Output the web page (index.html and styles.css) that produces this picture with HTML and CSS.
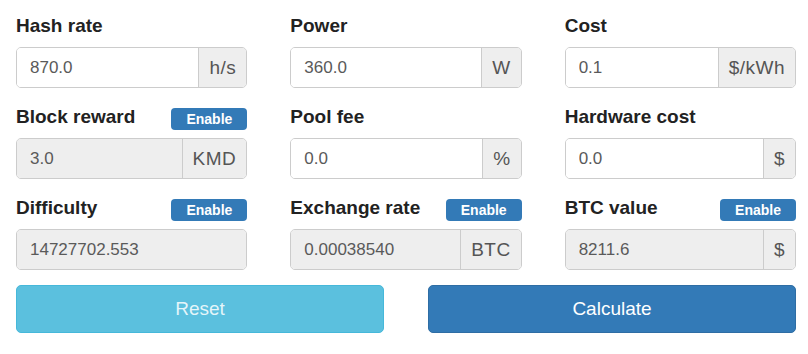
FILE: index.html
```html
<!DOCTYPE html>
<html lang="en">
<head>
    <meta charset="UTF-8">
    <meta name="viewport" content="width=device-width, initial-scale=1.0">
    <title>Mining Calculator</title>
    <link rel="stylesheet" href="styles.css">
</head>
<body>
    <div class="calc">
        <div class="fields">
            <div class="field">
                <div class="label-row"><label>Hash rate</label></div>
                <div class="input-group">
                    <input type="text" value="870.0">
                    <span class="addon">h/s</span>
                </div>
            </div>
            <div class="field">
                <div class="label-row"><label>Power</label></div>
                <div class="input-group">
                    <input type="text" value="360.0">
                    <span class="addon">W</span>
                </div>
            </div>
            <div class="field">
                <div class="label-row"><label>Cost</label></div>
                <div class="input-group">
                    <input type="text" value="0.1">
                    <span class="addon">$/kWh</span>
                </div>
            </div>

            <div class="field">
                <div class="label-row"><label>Block reward</label><button class="badge">Enable</button></div>
                <div class="input-group">
                    <input type="text" value="3.0" disabled>
                    <span class="addon">KMD</span>
                </div>
            </div>
            <div class="field">
                <div class="label-row"><label>Pool fee</label></div>
                <div class="input-group">
                    <input type="text" value="0.0">
                    <span class="addon">%</span>
                </div>
            </div>
            <div class="field">
                <div class="label-row"><label>Hardware cost</label></div>
                <div class="input-group">
                    <input type="text" value="0.0">
                    <span class="addon">$</span>
                </div>
            </div>

            <div class="field">
                <div class="label-row"><label>Difficulty</label><button class="badge">Enable</button></div>
                <div class="input-group">
                    <input type="text" value="14727702.553" disabled>
                </div>
            </div>
            <div class="field">
                <div class="label-row"><label>Exchange rate</label><button class="badge">Enable</button></div>
                <div class="input-group">
                    <input type="text" value="0.00038540" disabled>
                    <span class="addon">BTC</span>
                </div>
            </div>
            <div class="field">
                <div class="label-row"><label>BTC value</label><button class="badge">Enable</button></div>
                <div class="input-group">
                    <input type="text" value="8211.6" disabled>
                    <span class="addon">$</span>
                </div>
            </div>
        </div>

        <div class="actions">
            <button class="btn btn-reset">Reset</button>
            <button class="btn btn-calc">Calculate</button>
        </div>
    </div>
</body>
</html>
```

FILE: styles.css
```css
body {
    margin: 0;
    background-color: #fff;
    font-family: "Liberation Sans", Arial, sans-serif;
    color: #333;
}

.calc {
    width: 780px;
    padding: 17px 0 0 16px;
}

.fields {
    display: grid;
    grid-template-columns: repeat(3, minmax(0, 1fr));
    column-gap: 43px;
    row-gap: 20px;
}

.label-row {
    display: flex;
    justify-content: space-between;
    align-items: center;
    height: 22px;
    margin-bottom: 8px;
}

.label-row label {
    align-self: flex-start;
    font-size: 19px;
    line-height: 18px;
    font-weight: bold;
    color: #222;
}

.badge {
    height: 22px;
    padding: 0 15px;
    border: none;
    border-radius: 4px;
    background-color: #337ab7;
    color: #fff;
    font-family: inherit;
    font-size: 14px;
    font-weight: bold;
    line-height: 22px;
    cursor: pointer;
}

.input-group {
    display: flex;
    height: 41px;
    box-sizing: border-box;
    border: 1px solid #ccc;
    border-radius: 5px;
    overflow: hidden;
    box-shadow: inset 0 1px 1px rgba(0, 0, 0, 0.075);
}

.input-group input {
    flex: 1;
    width: 0;
    min-width: 0;
    padding: 0 13px;
    border: none;
    outline: none;
    background-color: #fff;
    color: #5a5a5a;
    font-family: inherit;
    font-size: 17px;
}

.input-group input:disabled {
    background-color: #eee;
    color: #5a5a5a;
    -webkit-text-fill-color: #5a5a5a;
    opacity: 1;
}

.addon {
    display: flex;
    align-items: center;
    padding: 0 10px;
    border-left: 1px solid #ccc;
    background-color: #eee;
    color: #555;
    font-size: 19px;
    letter-spacing: 0.5px;
}

.actions {
    display: grid;
    grid-template-columns: 1fr 1fr;
    column-gap: 44px;
    margin-top: 15px;
}

.btn {
    height: 48px;
    border-radius: 5px;
    font-family: inherit;
    font-size: 19px;
    cursor: pointer;
}

.btn-reset {
    background-color: #5bc0de;
    border: 1px solid #46b8da;
    color: rgba(255, 255, 255, 0.85);
}

.btn-calc {
    background-color: #337ab7;
    border: 1px solid #2e6da4;
    color: #fff;
}
```
